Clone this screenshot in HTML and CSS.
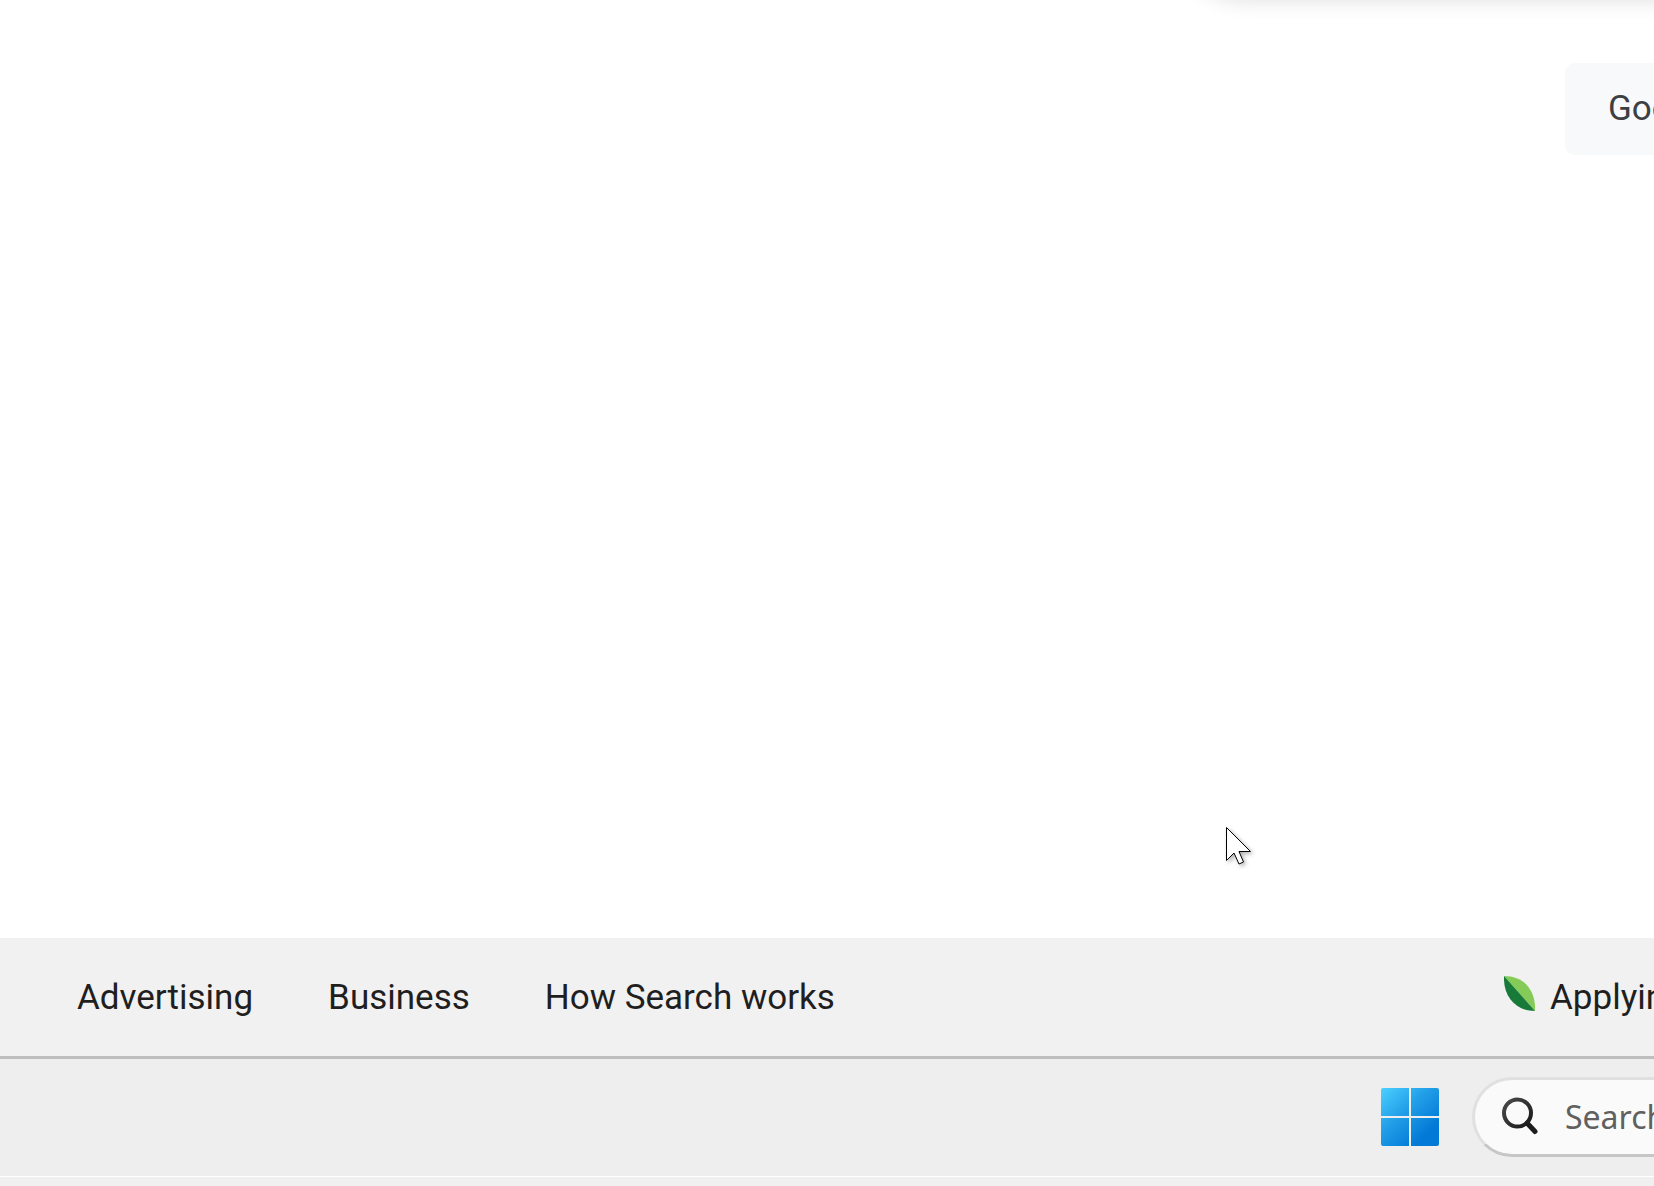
FILE: index.html
```
<!DOCTYPE html>
<html lang="en">
<head>
<meta charset="utf-8">
<title>Search</title>
<link rel="stylesheet" href="styles.css">
</head>
<body>
<main class="page">
  <div class="search-card"></div>
  <button class="search-button" type="button">Goo</button>
  <svg class="cursor" width="36" height="46" viewBox="0 0 36 46" aria-hidden="true">
    <path d="M1.500 1.500V34.500L9 27L14 38L18.500 36L14 25.500H25.500Z" fill="#fff" stroke="#000" stroke-width="1"/>
  </svg>
</main>
<footer class="footer">
  <nav class="footer-links">
    <a href="#">Advertising</a>
    <a href="#">Business</a>
    <a href="#">How Search works</a>
  </nav>
  <a class="footer-note" href="#">
    <svg class="leaf" width="31" height="35" viewBox="0 0 31 35" aria-hidden="true">
      <path d="M0 0C20 0 32 14 31 35Z" fill="#84cc57"/>
      <path d="M0 0C-1 20 11 35 31 35Z" fill="#187a38"/>
    </svg>
    <span class="note-text">Applyin</span>
  </a>
</footer>
<div class="taskbar">
  <button class="start" type="button" aria-label="Start">
    <svg width="58" height="58" viewBox="0 0 58 58" aria-hidden="true">
      <defs>
        <linearGradient id="tiles" gradientUnits="userSpaceOnUse" x1="0" y1="0" x2="44" y2="48">
          <stop offset="0" stop-color="#4cd0ff"/>
          <stop offset="0.500" stop-color="#229fe8"/>
          <stop offset="1" stop-color="#0279d6"/>
        </linearGradient>
      </defs>
      <path d="M2 0H28V28H0V2Q0 0 2 0ZM30 0H56Q58 0 58 2V28H30ZM0 30H28V58H2Q0 58 0 56ZM30 30H58V56Q58 58 56 58H30Z" fill="url(#tiles)"/>
    </svg>
  </button>
  <label class="taskbar-search">
    <svg width="38" height="40" viewBox="0 0 38 40" aria-hidden="true">
      <defs>
        <linearGradient id="lens" x1="0" y1="0" x2="1" y2="1">
          <stop offset="0" stop-color="#4a4a4a"/>
          <stop offset="1" stop-color="#181818"/>
        </linearGradient>
      </defs>
      <path d="M25 26L33 34.500" stroke="#1c1c1c" stroke-width="5" stroke-linecap="round"/>
      <circle cx="15.500" cy="16" r="13.500" fill="none" stroke="url(#lens)" stroke-width="4"/>
    </svg>
    <input class="taskbar-input" type="text" placeholder="Search" aria-label="Search">
  </label>
</div>
<div class="screen-edge"></div>
</body>
</html>
```
FILE: styles.css
```
* {
  box-sizing: border-box;
}

body {
  margin: 0;
  min-height: 100vh;
  display: flex;
  flex-direction: column;
  overflow: hidden;
  background: #fff;
  font-family: Roboto, "Liberation Sans", sans-serif;
  font-size: 35px;
  line-height: 40px;
  color: #1f1f1f;
}

button,
input {
  margin: 0;
  border: 0;
  font: inherit;
}

a {
  color: inherit;
  text-decoration: none;
}

svg {
  display: block;
  flex: none;
}

.page {
  position: relative;
  flex: 1;
  display: flex;
  justify-content: flex-end;
  align-items: flex-start;
  padding-top: 63px;
  overflow: hidden;
}

.search-card {
  position: absolute;
  top: -127px;
  right: -80px;
  width: 550px;
  height: 120px;
  border-radius: 60px;
  box-shadow: 0 5px 20px 2px rgba(64, 70, 67, 0.18);
}

.search-button {
  width: 89px;
  height: 92px;
  padding: 0 0 0 43px;
  overflow: hidden;
  border-radius: 10px 0 0 10px;
  background: #f8f9fa;
  color: #3c4043;
  text-align: left;
  white-space: nowrap;
}

.cursor {
  position: absolute;
  left: 1225px;
  bottom: 66px;
  filter: drop-shadow(2px 2px 2px rgba(0, 0, 0, 0.3));
}

.footer {
  display: flex;
  justify-content: space-between;
  align-items: center;
  height: 118px;
  padding: 2px 0 0 77px;
  background: #f1f1f1;
}

.footer-links {
  display: flex;
  gap: 75px;
}

.footer-note {
  display: flex;
  align-items: center;
  gap: 15px;
  width: 150px;
}

.leaf {
  margin-bottom: 10px;
}

.note-text {
  overflow: hidden;
  white-space: nowrap;
}

.taskbar {
  display: flex;
  justify-content: flex-end;
  align-items: center;
  gap: 33px;
  height: 120px;
  padding-bottom: 2px;
  border-top: 3px solid #bebebe;
  background: #eee;
}

.start {
  padding: 0;
  background: none;
}

.taskbar-search {
  display: flex;
  align-items: center;
  gap: 25px;
  width: 182px;
  height: 80px;
  padding-left: 27px;
  border: 3px solid #e0e0e0;
  border-right: 0;
  border-bottom-color: #c6c6c6;
  border-radius: 40px 0 0 40px;
  background: #fafafa;
}

.taskbar-input {
  flex: 1;
  min-width: 0;
  padding: 0;
  background: none;
  font-family: "Noto Sans", sans-serif;
  font-size: 32px;
}

.taskbar-input::placeholder {
  color: #606060;
  opacity: 1;
}

.screen-edge {
  height: 10px;
  border-top: 1px solid #fff;
  background: #f0f0f0;
}
```
